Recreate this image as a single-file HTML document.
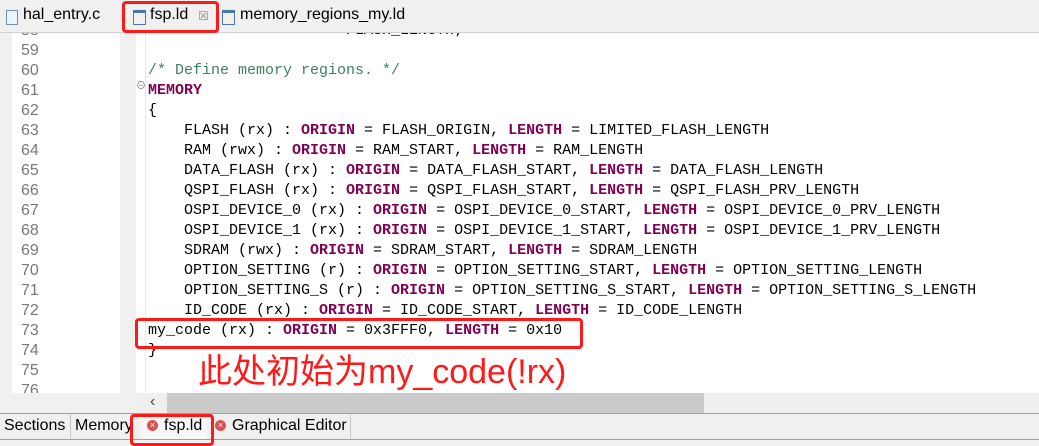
<!DOCTYPE html>
<html><head><meta charset="utf-8"><style>
body{margin:0;width:1039px;height:446px;overflow:hidden;background:#f0f0f0;position:relative;font-family:"Liberation Sans","Noto Sans CJK SC",sans-serif}
.abs{position:absolute}
.tabbar{left:0;top:0;width:1039px;height:33px;background:#f0f0f0}
.tab{top:6px;font-size:16px;color:#000;white-space:nowrap}
.nums{left:12px;top:33px;width:108px;height:360px;background:#fff;overflow:hidden}
.ed{left:136px;top:33px;width:903px;height:360px;background:#fff;overflow:hidden}
.code{font-family:"Liberation Mono",monospace;font-size:15px;line-height:20px;white-space:pre;color:#000}
.k{color:#7f0055;font-weight:bold}
.c{color:#3f7f5f}
.n{color:#787878;font-family:"Liberation Sans",sans-serif;font-size:16px;line-height:20px;padding-left:9px}
.red{border:3px solid #ff1a1a;border-radius:4px}
</style></head><body>
<div class="abs tabbar"></div>
<div class="abs" style="left:0;top:32px;width:1039px;height:1px;background:#d0d0d0"></div>
<div class="abs" style="left:6px;top:10px;width:10px;height:13px;border:1px solid #6a8fb5;background:#eef4fb"></div>
<div class="abs tab" style="left:23px">hal_entry.c</div>
<div class="abs" style="left:133px;top:10px;width:11px;height:11px;border:1px solid #4a78a8;border-top-width:3px"></div>
<div class="abs tab" style="left:150px">fsp.ld</div>
<div class="abs" style="left:198px;top:9px;font-size:12px;color:#888">☒</div>
<div class="abs red" style="left:122px;top:1px;width:91px;height:26px"></div>
<div class="abs" style="left:222px;top:10px;width:11px;height:11px;border:1px solid #4a78a8;border-top-width:3px"></div>
<div class="abs tab" style="left:240px">memory_regions_my.ld</div>

<div class="abs nums"><div class="n" style="margin-top:-12px">58<br>59<br>60<br>61<br>62<br>63<br>64<br>65<br>66<br>67<br>68<br>69<br>70<br>71<br>72<br>73<br>74<br>75<br>76</div></div>
<div class="abs ed">
<div class="abs" style="left:9px;top:0;width:1px;height:360px;background:#e8e8e8"></div>
<div class="code abs" style="left:12px;top:-12px">                      FLASH_LENGTH;

<span class="c">/* Define memory regions. */</span>
<span class="k">MEMORY</span>
{
    FLASH (rx) : <span class="k">ORIGIN</span> = FLASH_ORIGIN, <span class="k">LENGTH</span> = LIMITED_FLASH_LENGTH
    RAM (rwx) : <span class="k">ORIGIN</span> = RAM_START, <span class="k">LENGTH</span> = RAM_LENGTH
    DATA_FLASH (rx) : <span class="k">ORIGIN</span> = DATA_FLASH_START, <span class="k">LENGTH</span> = DATA_FLASH_LENGTH
    QSPI_FLASH (rx) : <span class="k">ORIGIN</span> = QSPI_FLASH_START, <span class="k">LENGTH</span> = QSPI_FLASH_PRV_LENGTH
    OSPI_DEVICE_0 (rx) : <span class="k">ORIGIN</span> = OSPI_DEVICE_0_START, <span class="k">LENGTH</span> = OSPI_DEVICE_0_PRV_LENGTH
    OSPI_DEVICE_1 (rx) : <span class="k">ORIGIN</span> = OSPI_DEVICE_1_START, <span class="k">LENGTH</span> = OSPI_DEVICE_1_PRV_LENGTH
    SDRAM (rwx) : <span class="k">ORIGIN</span> = SDRAM_START, <span class="k">LENGTH</span> = SDRAM_LENGTH
    OPTION_SETTING (r) : <span class="k">ORIGIN</span> = OPTION_SETTING_START, <span class="k">LENGTH</span> = OPTION_SETTING_LENGTH
    OPTION_SETTING_S (r) : <span class="k">ORIGIN</span> = OPTION_SETTING_S_START, <span class="k">LENGTH</span> = OPTION_SETTING_S_LENGTH
    ID_CODE (rx) : <span class="k">ORIGIN</span> = ID_CODE_START, <span class="k">LENGTH</span> = ID_CODE_LENGTH
my_code (rx) : <span class="k">ORIGIN</span> = 0x3FFF0, <span class="k">LENGTH</span> = 0x10
}</div>
</div>
<div class="abs" style="left:136px;top:77px;font-size:10px;color:#777">⊖</div>
<div class="abs red" style="left:135px;top:318px;width:442px;height:25px"></div>
<div class="abs" style="left:198px;top:351px;font-size:34px;color:#ff1a1a;line-height:42px;white-space:nowrap">此处初始为my_code(!rx)</div>

<div class="abs" style="left:136px;top:393px;width:903px;height:20px;background:#efefef"></div>
<div class="abs" style="left:167px;top:393px;width:537px;height:20px;background:#cbcbcb"></div>
<div class="abs" style="left:150px;top:393px;font-size:16px;color:#444">‹</div>
<div class="abs" style="left:0;top:413px;width:1039px;height:1px;background:#a0a0a0"></div>
<div class="abs" style="left:0;top:439px;width:1039px;height:1px;background:#a0a0a0"></div>
<div class="abs tab" style="left:4px;top:417px">Sections</div>
<div class="abs" style="left:70px;top:414px;width:1px;height:25px;background:#c8c8c8"></div>
<div class="abs tab" style="left:75px;top:417px">Memory</div>
<div class="abs" style="left:140px;top:414px;width:67px;height:25px;background:#f7f7f7"></div>
<div class="abs" style="left:147px;top:420px;width:11px;height:11px;border-radius:50%;background:#d9534f;color:#fff;font-size:9px;line-height:11px;text-align:center">×</div>
<div class="abs tab" style="left:164px;top:417px">fsp.ld</div>
<div class="abs red" style="left:130px;top:414px;width:78px;height:26px"></div>
<div class="abs" style="left:215px;top:420px;width:11px;height:11px;border-radius:50%;background:#d9534f;color:#fff;font-size:9px;line-height:11px;text-align:center">×</div>
<div class="abs tab" style="left:232px;top:417px">Graphical Editor</div>
<div class="abs" style="left:350px;top:414px;width:1px;height:25px;background:#c8c8c8"></div>
</body></html>
